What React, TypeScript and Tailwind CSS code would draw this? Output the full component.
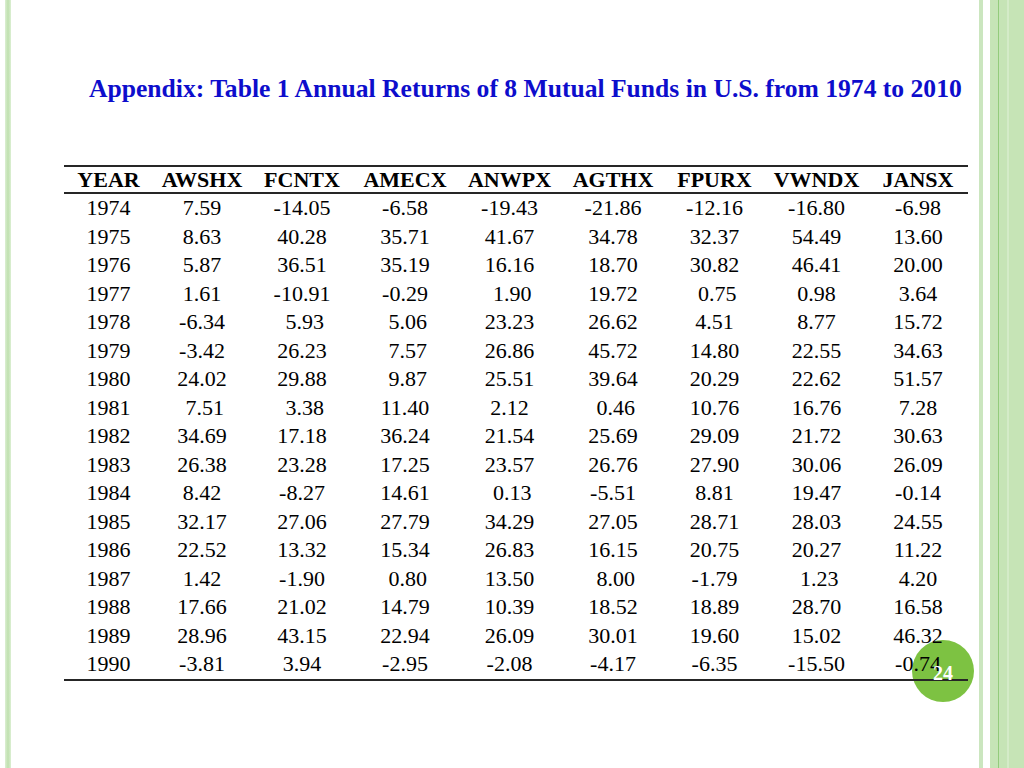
const headers = ["YEAR", "AWSHX", "FCNTX", "AMECX", "ANWPX", "AGTHX", "FPURX", "VWNDX", "JANSX"];

const rows: string[][] = [
  ["1974", "7.59", "-14.05", "-6.58", "-19.43", "-21.86", "-12.16", "-16.80", "-6.98"],
  ["1975", "8.63", "40.28", "35.71", "41.67", "34.78", "32.37", "54.49", "13.60"],
  ["1976", "5.87", "36.51", "35.19", "16.16", "18.70", "30.82", "46.41", "20.00"],
  ["1977", "1.61", "-10.91", "-0.29", " 1.90", "19.72", " 0.75", "0.98", "3.64"],
  ["1978", "-6.34", " 5.93", " 5.06", "23.23", "26.62", "4.51", "8.77", "15.72"],
  ["1979", "-3.42", "26.23", " 7.57", "26.86", "45.72", "14.80", "22.55", "34.63"],
  ["1980", "24.02", "29.88", " 9.87", "25.51", "39.64", "20.29", "22.62", "51.57"],
  ["1981", " 7.51", " 3.38", "11.40", "2.12", " 0.46", "10.76", "16.76", "7.28"],
  ["1982", "34.69", "17.18", "36.24", "21.54", "25.69", "29.09", "21.72", "30.63"],
  ["1983", "26.38", "23.28", "17.25", "23.57", "26.76", "27.90", "30.06", "26.09"],
  ["1984", "8.42", "-8.27", "14.61", " 0.13", "-5.51", "8.81", "19.47", "-0.14"],
  ["1985", "32.17", "27.06", "27.79", "34.29", "27.05", "28.71", "28.03", "24.55"],
  ["1986", "22.52", "13.32", "15.34", "26.83", "16.15", "20.75", "20.27", "11.22"],
  ["1987", "1.42", "-1.90", " 0.80", "13.50", " 8.00", "-1.79", " 1.23", "4.20"],
  ["1988", "17.66", "21.02", "14.79", "10.39", "18.52", "18.89", "28.70", "16.58"],
  ["1989", "28.96", "43.15", "22.94", "26.09", "30.01", "19.60", "15.02", "46.32"],
  ["1990", "-3.81", "3.94", "-2.95", "-2.08", "-4.17", "-6.35", "-15.50", "-0.74"],
];

const cols = "grid grid-cols-[89px_98px_102px_104px_105px_102px_101px_103px_100px]";

export default function App() {
  return (
    <div className="relative flex h-[768px] w-[1024px] overflow-hidden bg-white font-['Liberation_Serif','Times_New_Roman',serif]">
      {/* left rule */}
      <div className="ml-[5px] w-[6px] shrink-0 bg-gradient-to-r from-[#dcefd3] via-[#bfe0ae] to-[#dcefd3]" />

      {/* page number disc, sits behind the table */}
      <div className="absolute left-[912px] top-[640px] h-[62px] w-[62px] rounded-full bg-[#7dc242]" />

      <div className="relative flex flex-1 flex-col">
        <h1 className="ml-[78px] mt-[73px] text-[25.6px] font-bold leading-[32px] text-[#0d0dcc]">
          Appendix: Table 1 Annual Returns of 8 Mutual Funds in U.S. from 1974 to 2010
        </h1>

        <div className="ml-[53px] mt-[60px] w-[904px] border-y-2 border-[#262626] text-[22px] text-black">
          <div className={`${cols} h-[27px] items-center border-b-2 border-[#262626] font-bold`}>
            {headers.map((h) => (
              <div key={h} className="text-center leading-[25px]">
                {h}
              </div>
            ))}
          </div>
          {rows.map((r) => (
            <div key={r[0]} className={`${cols} h-[28.5px]`}>
              {r.map((v, i) => (
                <div key={i} className="whitespace-pre text-center leading-[28.5px]">
                  {v}
                </div>
              ))}
            </div>
          ))}
        </div>
      </div>

      {/* page number label, drawn over the table */}
      <div className="absolute left-[912px] top-[640px] z-10 flex h-[62px] w-[62px] items-center justify-center">
        <span className="mt-[3px] text-[20px] font-bold text-white">24</span>
      </div>

      {/* right decoration */}
      <div className="flex shrink-0">
        <div className="w-[4px] bg-[#cbe6bf]" />
        <div className="w-[7px] bg-white" />
        <div className="flex w-[34px] bg-[#c6e4b6]">
          <div className="w-[8px]" />
          <div className="w-[1px] bg-[#93cb7b]" />
          <div className="w-[8px]" />
          <div className="w-[2px] bg-[#d4ebc8]" />
        </div>
      </div>
    </div>
  );
}
